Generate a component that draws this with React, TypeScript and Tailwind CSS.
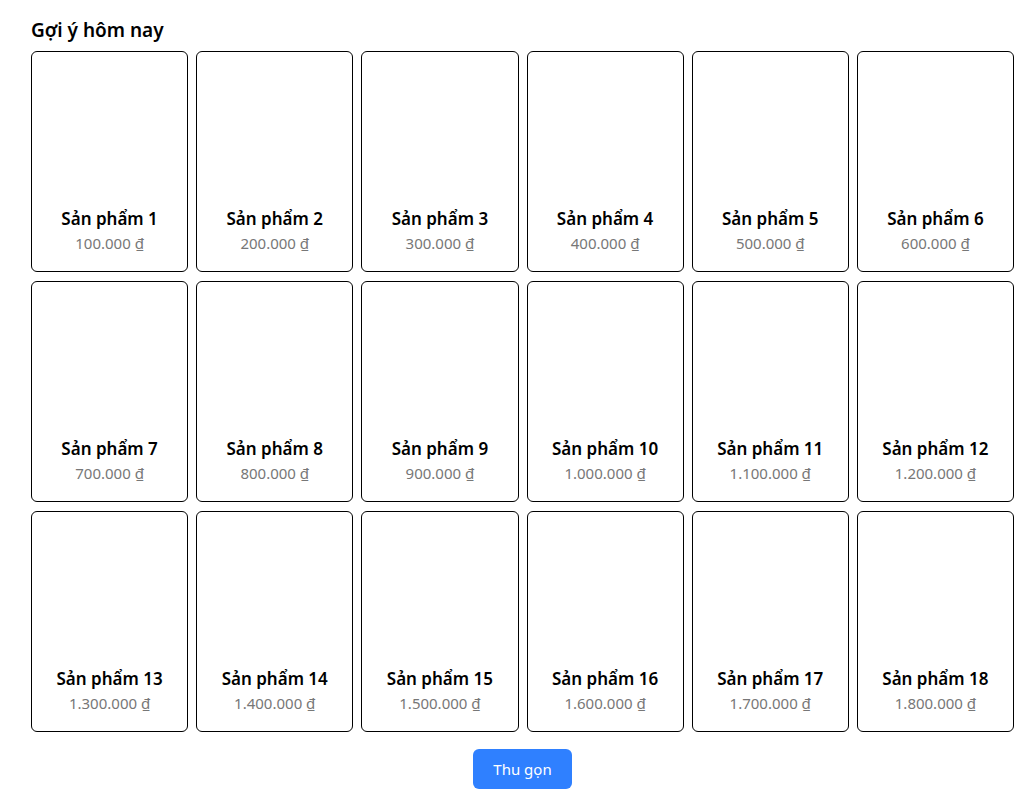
const products = Array.from({ length: 18 }, (_, i) => ({
  id: i + 1,
  name: `Sản phẩm ${i + 1}`,
  price: ((i + 1) * 100000).toLocaleString('vi-VN').replace(/,/g, '.') + ' ₫',
}));

const ProductCard = ({ name, price }: { name: string; price: string }) => (
  <div className="h-[221px] border border-black rounded-md bg-white flex flex-col items-center justify-end pb-[18px]">
    <div className="text-[17px] font-semibold text-black leading-6">{name}</div>
    <div className="text-[15px] text-[#777777] leading-5 mt-[2px]">{price}</div>
  </div>
);

export default function App() {
  return (
    <div className="min-h-screen bg-white pl-[31px] pr-[18px] pt-[16px] pb-2" style={{ fontFamily: '"Noto Sans", "Open Sans", sans-serif' }}>
      <h2 className="text-[19px] font-semibold text-black leading-7 mb-[7px]">Gợi ý hôm nay</h2>
      <div className="grid grid-cols-6 gap-x-2 gap-y-[9px]">
        {products.map((p) => (
          <ProductCard key={p.id} name={p.name} price={p.price} />
        ))}
      </div>
      <div className="flex justify-center mt-[17px]">
        <button className="h-10 w-[99px] rounded-md bg-[#2f80ff] text-white text-[15px]">Thu gọn</button>
      </div>
    </div>
  );
}
